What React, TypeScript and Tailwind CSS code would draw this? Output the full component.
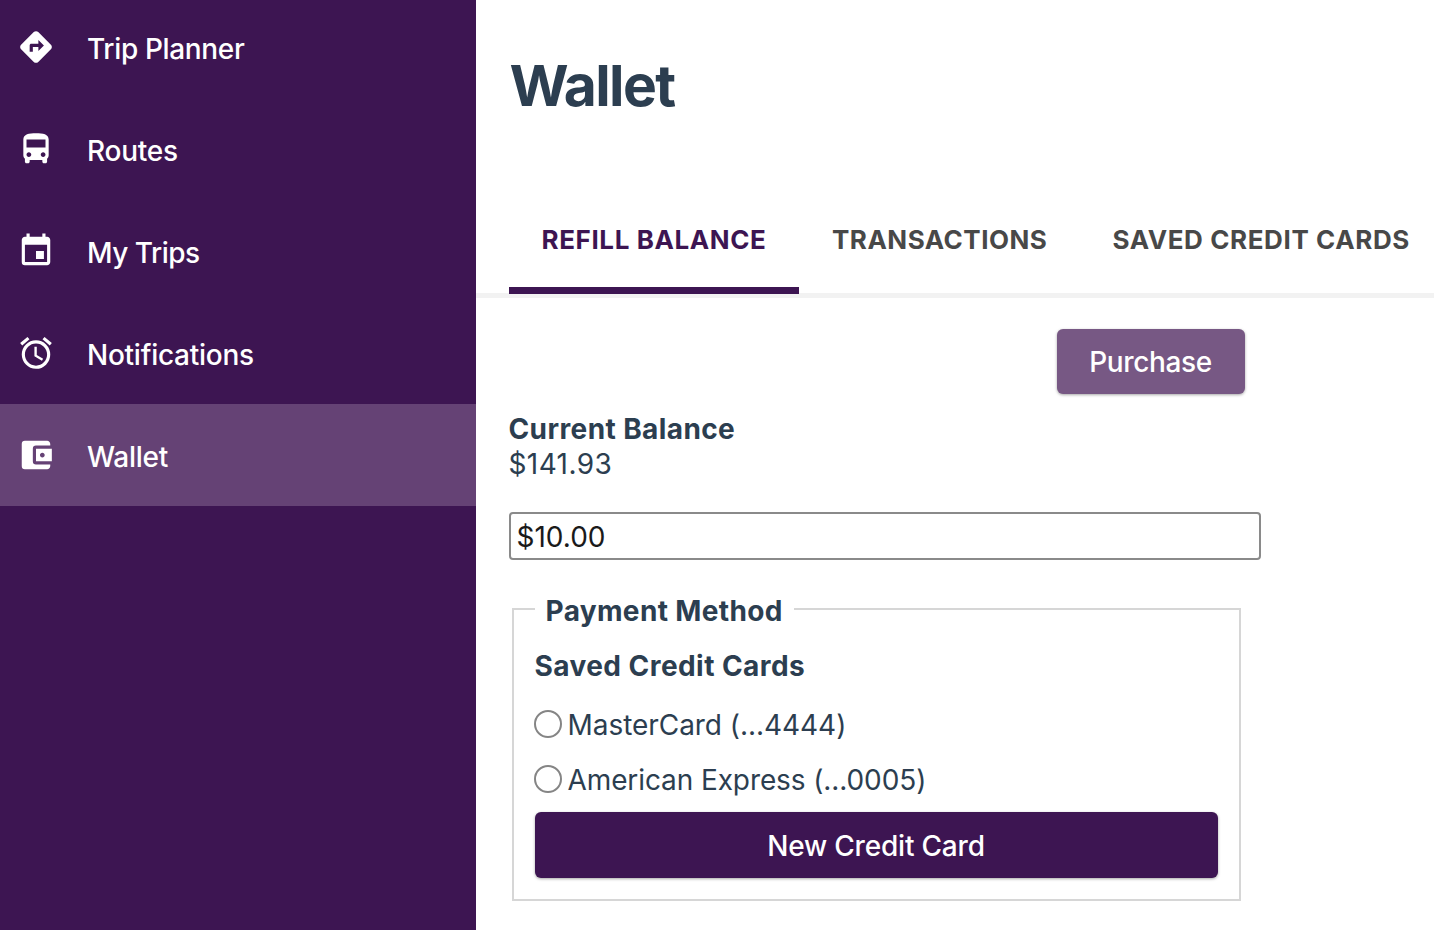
import React, { useState } from "react";
import {
  MdAccessAlarm,
  MdAccountBalanceWallet,
  MdDirections,
  MdDirectionsBus,
  MdEvent,
} from "react-icons/md";
import type { IconType } from "react-icons";

interface NavItem {
  label: string;
  icon: IconType;
  tracking: string;
}

interface Tab {
  label: string;
  width: string;
  tracking: string;
}

interface Card {
  id: string;
  label: string;
  tracking: string;
}

const navItems: NavItem[] = [
  { label: "Trip Planner", icon: MdDirections, tracking: "tracking-[-0.35px]" },
  { label: "Routes", icon: MdDirectionsBus, tracking: "tracking-[-0.25px]" },
  { label: "My Trips", icon: MdEvent, tracking: "tracking-[-0.5px]" },
  { label: "Notifications", icon: MdAccessAlarm, tracking: "tracking-[-0.25px]" },
  { label: "Wallet", icon: MdAccountBalanceWallet, tracking: "tracking-[-0.25px]" },
];

const tabs: Tab[] = [
  { label: "Refill Balance", width: "w-[290px]", tracking: "tracking-[0.6px]" },
  { label: "Transactions", width: "w-[280px]", tracking: "tracking-[0.5px]" },
  { label: "Saved Credit Cards", width: "w-[363px]", tracking: "tracking-[0.6px]" },
];

const cards: Card[] = [
  { id: "mc", label: "MasterCard (...4444)", tracking: "tracking-[-0.05px]" },
  { id: "amex", label: "American Express (...0005)", tracking: "tracking-[-0.1px]" },
];

function Sidebar() {
  const [active, setActive] = useState("Wallet");

  return (
    <aside className="w-[475.5px] shrink-0 bg-[#3d1552] overflow-hidden">
      <nav className="-mt-1">
        {navItems.map(({ label, icon: Icon, tracking }) => (
          <button
            key={label}
            onClick={() => setActive(label)}
            className={`flex items-center w-full h-[102px] pl-[17px] text-white ${
              active === label ? "bg-[#654275]" : ""
            }`}>
            <Icon className="w-[38px] h-[38px] shrink-0" />
            <span
              className={`ml-[32px] pt-[4px] text-[28px] leading-[36px] font-medium whitespace-nowrap ${tracking}`}>
              {label}
            </span>
          </button>
        ))}
      </nav>
    </aside>
  );
}

function Tabs() {
  const [current, setCurrent] = useState("Refill Balance");

  return (
    <div className="flex gap-[0.5px] h-[114px] pl-[33px] border-b-[5px] border-[#f2f2f2]">
      {tabs.map((tab) => (
        <button
          key={tab.label}
          onClick={() => setCurrent(tab.label)}
          className={`h-[110px] shrink-0 pt-[9px] pl-[33px] text-left text-[26px] leading-[32px] font-bold uppercase whitespace-nowrap border-b-[7px] ${
            tab.width
          } ${tab.tracking} ${
            current === tab.label
              ? "text-[#3d1552] border-[#3d1552]"
              : "text-[#484848] border-transparent"
          }`}>
          {tab.label}
        </button>
      ))}
    </div>
  );
}

function PaymentMethod() {
  const [selected, setSelected] = useState("");

  return (
    <fieldset className="w-[729px] h-[309px] ml-[3px] mt-[32px] px-[21px] border-2 border-[#d6d6d6]">
      <legend className="px-[11px] h-[34px] text-[28px] leading-[38px] font-bold tracking-[0.35px]">
        Payment Method
      </legend>
      <h3 className="mt-[23px] text-[28px] leading-[34px] font-bold tracking-[0.45px]">
        Saved Credit Cards
      </h3>
      <div className="mt-[13px]">
        {cards.map((card) => (
          <label key={card.id} className="flex items-center h-[55px]">
            <input
              type="radio"
              name="card"
              checked={selected === card.id}
              onChange={() => setSelected(card.id)}
              className="appearance-none -ml-px size-[28px] shrink-0 rounded-full border-2 border-[#858585] bg-white checked:bg-[#3d1552]"
            />
            <span
              className={`ml-[6px] pt-[2px] text-[28px] leading-[34px] whitespace-nowrap ${card.tracking}`}>
              {card.label}
            </span>
          </label>
        ))}
      </div>
      <button className="mt-[6px] pt-[2px] w-[683px] h-[66px] rounded-[6px] bg-[#3d1552] text-white text-[28px] font-medium tracking-[-0.2px] shadow-[0_1px_3px_rgba(0,0,0,0.35)]">
        New Credit Card
      </button>
    </fieldset>
  );
}

export default function App() {
  const [amount, setAmount] = useState("$10.00");

  return (
    <div className="flex w-[1434px] h-[930px] overflow-hidden bg-white text-[#2c3e50] font-['Inter',sans-serif]">
      <Sidebar />
      <main className="flex-1 min-w-0 overflow-hidden">
        <h1 className="pt-[50px] pl-[34px] h-[184px] text-[57px] leading-[72px] font-bold tracking-[-1.6px]">
          Wallet
        </h1>
        <Tabs />
        <section className="pl-[33px] pt-[31px]">
          <div className="flex justify-end w-[736px]">
            <button className="w-[188px] h-[65px] rounded-[6px] bg-[#775884] text-white text-[28px] font-medium tracking-[-0.35px] shadow-[0_1px_3px_rgba(0,0,0,0.35)]">
              Purchase
            </button>
          </div>
          <div className="mt-[18px] text-[28px] leading-[35px] tracking-[0.4px]">
            <p className="font-bold">Current Balance</p>
            <p>$141.93</p>
          </div>
          <input
            value={amount}
            onChange={(e) => setAmount(e.target.value)}
            className="block mt-[30px] w-[752px] h-[48px] pt-[2px] px-[6px] text-[28px] text-[#1a1a1a] bg-white border-2 border-[#8a8a8a] rounded-[4px]"
          />
          <PaymentMethod />
        </section>
      </main>
    </div>
  );
}
